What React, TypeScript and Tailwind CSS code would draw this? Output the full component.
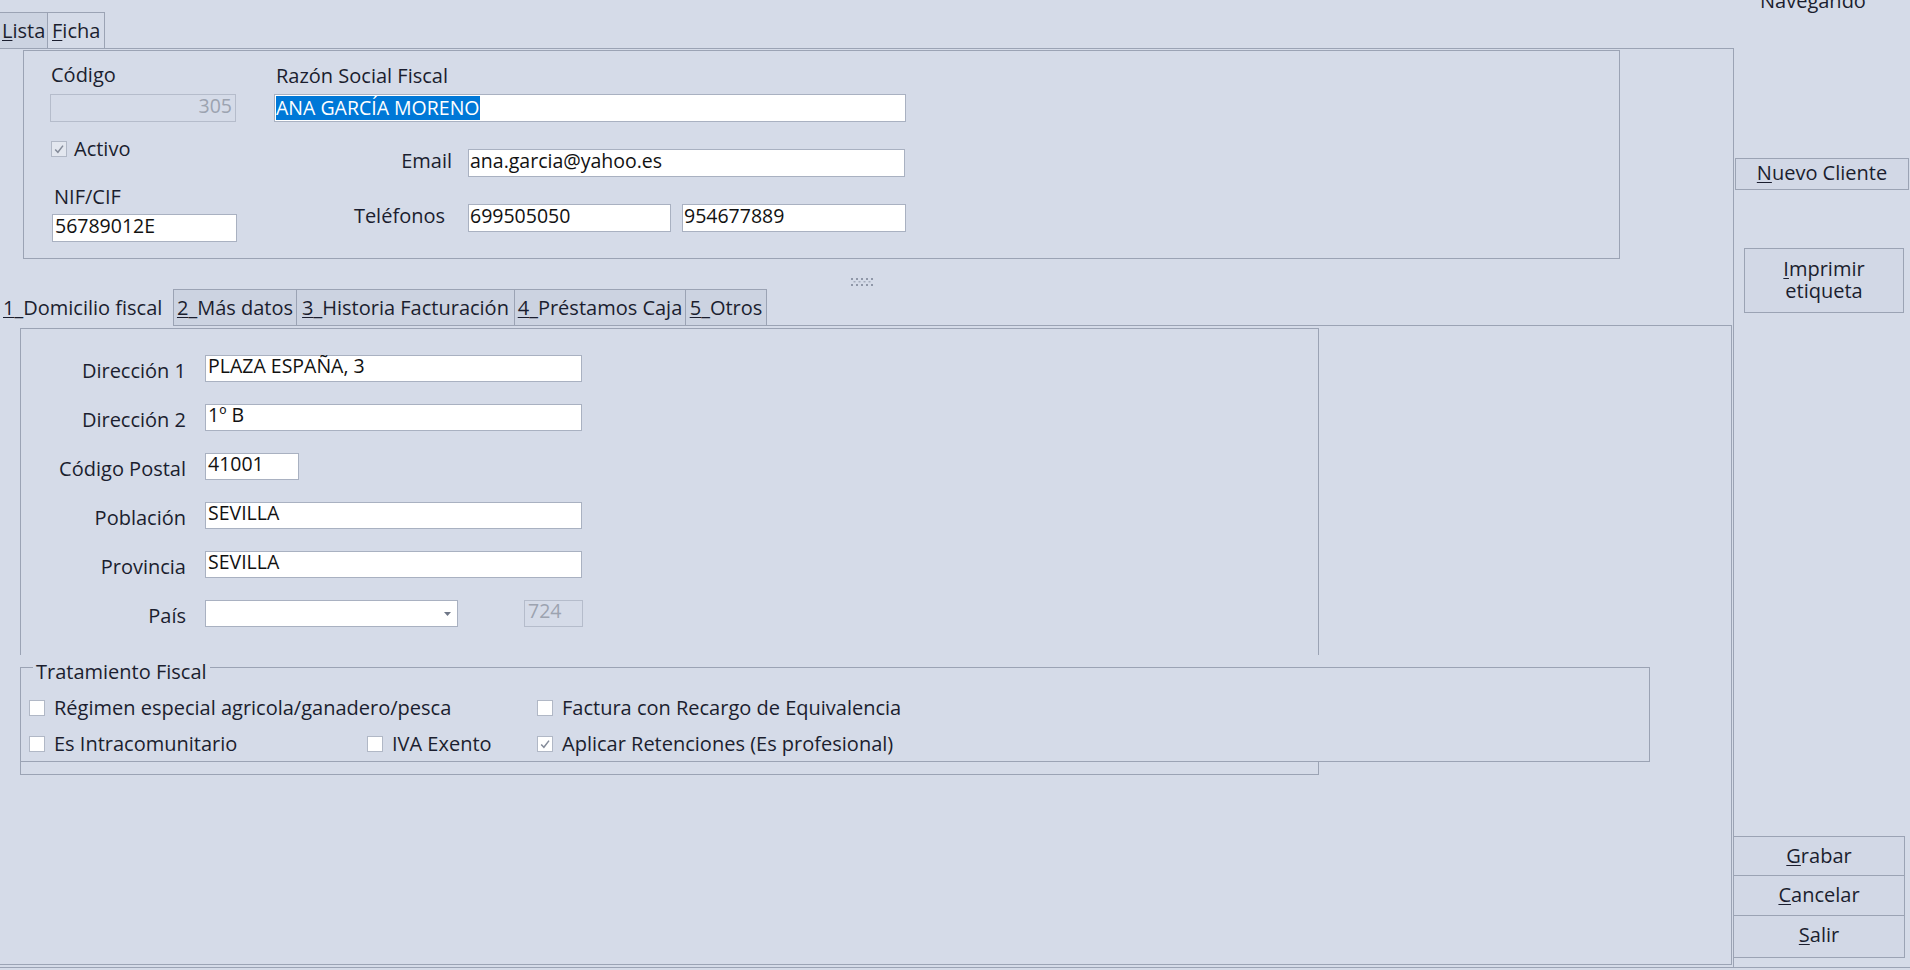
import React from "react";

// Underlined mnemonic letter, as Swing draws it on tabs, buttons and labels.
function M({ children }: { children: React.ReactNode }) {
  return <span className="underline decoration-1 underline-offset-[2px]">{children}</span>;
}

function Check({ checked = false, muted = false }: { checked?: boolean; muted?: boolean }) {
  return (
    <span
      className={`flex h-[16px] w-[16px] shrink-0 items-center justify-center border border-[#b1b8c6] ${
        muted ? "bg-[#e3e7ef]" : "bg-white"
      }`}
    >
      {checked && (
        <svg width="12" height="12" viewBox="0 0 12 12">
          <path d="M2.2 6.4 L4.9 9.3 L10 2.6" fill="none" stroke="#858c9a" strokeWidth="1.5" />
        </svg>
      )}
    </span>
  );
}

function CheckItem({
  label,
  checked = false,
  className = "",
}: {
  label: string;
  checked?: boolean;
  className?: string;
}) {
  return (
    <div className={`flex h-[23px] items-start gap-[9px] whitespace-nowrap ${className}`}>
      <span className="mt-[3px]">
        <Check checked={checked} />
      </span>
      <span className="-mt-[1px]">{label}</span>
    </div>
  );
}

function FormRow({ label, children }: { label: string; children: React.ReactNode }) {
  return (
    <div className="flex h-[27px] items-start">
      <div className="mt-[4px] w-[165px] text-right">{label}</div>
      <div className="ml-[19px] flex items-start">{children}</div>
    </div>
  );
}

function TextBox({ value, className = "" }: { value: string; className?: string }) {
  return (
    <div
      className={`h-[27px] whitespace-nowrap border border-[#a9b1c1] bg-white px-[2px] text-[19.5px] leading-[19px] text-[#111] ${className}`}
    >
      {value}
    </div>
  );
}

export default function App() {
  return (
    <div className="h-[970px] w-[1910px] overflow-hidden bg-[#d5dbe8] font-['Open_Sans','Liberation_Sans',Arial,sans-serif] text-[20px] leading-[23px] text-[#1b1e2f]">
      <div className="flex h-[968px] border-b border-[#9ba3b4]">
        {/* Main work area */}
        <div className="flex w-[1734px] flex-col">
          {/* Lista / Ficha */}
          <div className="mt-[12px] flex h-[36px] whitespace-nowrap">
            <div className="w-[47px] border-t border-[#9ba3b4] bg-[#ccd3e1] pl-[2px] pt-[6px]">
              <M>L</M>ista
            </div>
            <div className="w-[58px] border-x border-t border-[#9ba3b4] pl-[4px] pt-[6px]">
              <M>F</M>icha
            </div>
          </div>

          <div className="flex flex-1 flex-col border-r border-t border-[#9ba3b4]">
            {/* Header data */}
            <div className="ml-[23px] mt-[1px] flex h-[209px] w-[1597px] border border-[#9ba3b4] pl-[26px]">
              <div className="flex w-[186px] flex-col">
                <div className="ml-[1px] mt-[12px]">Código</div>
                <div className="mt-[8px] h-[28px] w-[186px] border border-[#b5bccb] pr-[3px] text-right text-[19.5px] leading-[22px] text-[#9ca3b0]">
                  305
                </div>
                <div className="ml-[1px] mt-[15px] flex h-[23px] items-center gap-[7px]">
                  <Check checked muted />
                  <span className="-mt-[1px]">Activo</span>
                </div>
                <div className="ml-[4px] mt-[25px]">NIF/CIF</div>
                <div className="ml-[2px] mt-[6px] h-[28px] w-[185px] border border-[#a9b1c1] bg-white px-[2px] text-[19.5px] leading-[22px] text-[#111]">
                  56789012E
                </div>
              </div>

              <div className="ml-[38px] flex flex-col">
                <div className="ml-[2px] mt-[13px]">Razón Social Fiscal</div>
                <div className="mt-[7px] h-[28px] w-[632px] border border-[#a9b1c1] bg-white px-[1px] text-[19.5px] leading-[22px]">
                  <span className="mt-[1px] inline-block bg-[#0078d7] leading-[24px] text-white">
                    ANA GARCÍA MORENO
                  </span>
                </div>
                <div className="mt-[27px] flex items-start">
                  <div className="w-[178px] text-right">Email</div>
                  <div className="ml-[16px] h-[28px] w-[437px] border border-[#a9b1c1] bg-white px-[1px] text-[19.5px] leading-[22px] text-[#111]">
                    ana.garcia@yahoo.es
                  </div>
                </div>
                <div className="mt-[27px] flex items-start">
                  <div className="w-[171px] text-right">Teléfonos</div>
                  <div className="ml-[23px] h-[28px] w-[203px] border border-[#a9b1c1] bg-white px-[1px] text-[19.5px] leading-[22px] text-[#111]">
                    699505050
                  </div>
                  <div className="ml-[11px] h-[28px] w-[224px] border border-[#a9b1c1] bg-white px-[1px] text-[19.5px] leading-[22px] text-[#111]">
                    954677889
                  </div>
                </div>
              </div>
            </div>

            {/* Split pane grip */}
            <div className="ml-[851px] mt-[19px] h-[8px] w-[24px]">
              <svg width="24" height="8" viewBox="0 0 24 8">
                {[0, 5, 10, 15, 20].map((x) => (
                  <g key={x} fill="#8f97a8">
                    <rect x={x} y={0} width="2" height="2" />
                    <rect x={x} y={6} width="2" height="2" />
                  </g>
                ))}
                {[2.5, 7.5, 12.5, 17.5].map((x) => (
                  <rect key={x} x={x} y={3} width="2" height="1.5" fill="#a6adbc" />
                ))}
              </svg>
            </div>

            {/* Tabbed pane */}
            <div className="mb-[2px] mt-[3px] flex w-[1732px] flex-1 flex-col">
              <div className="flex h-[37px] whitespace-nowrap">
                <div className="w-[173px] pl-[3px] pt-[7px]">
                  <M>1</M>_Domicilio fiscal
                </div>
                <div className="w-[123px] border-y border-l border-[#9ba3b4] bg-[#ccd3e1] pt-[6px] text-center">
                  <M>2</M>_Más datos
                </div>
                <div className="w-[218px] border-y border-l border-[#9ba3b4] bg-[#ccd3e1] pt-[6px] text-center">
                  <M>3</M>_Historia Facturación
                </div>
                <div className="w-[171px] border-y border-l border-[#9ba3b4] bg-[#ccd3e1] pt-[6px] text-center">
                  <M>4</M>_Préstamos Caja
                </div>
                <div className="w-[82px] border border-[#9ba3b4] bg-[#ccd3e1] pt-[6px] text-center">
                  <M>5</M>_Otros
                </div>
                <div className="flex-1 border-b border-[#9ba3b4]" />
              </div>

              <div className="flex-1 border-b border-r border-[#9ba3b4]">
                <div className="ml-[20px] mt-[2px] h-[447px] w-[1299px] border border-[#9ba3b4]">
                  <div className="flex flex-col gap-[22px] pt-[26px]">
                    <FormRow label="Dirección 1">
                      <TextBox value="PLAZA ESPAÑA, 3" className="w-[377px]" />
                    </FormRow>
                    <FormRow label="Dirección 2">
                      <TextBox value="1º B" className="w-[377px]" />
                    </FormRow>
                    <FormRow label="Código Postal">
                      <TextBox value="41001" className="w-[94px]" />
                    </FormRow>
                    <FormRow label="Población">
                      <TextBox value="SEVILLA" className="w-[377px]" />
                    </FormRow>
                    <FormRow label="Provincia">
                      <TextBox value="SEVILLA" className="w-[377px]" />
                    </FormRow>
                    <FormRow label="País">
                      <div className="flex h-[27px] w-[253px] items-center justify-end border border-[#a9b1c1] bg-white pr-[6px]">
                        <svg width="7" height="4" viewBox="0 0 7 4">
                          <path d="M0 0 H7 L3.5 4 Z" fill="#6f7787" />
                        </svg>
                      </div>
                      <div className="ml-[66px] h-[27px] w-[59px] border border-[#b5bccb] px-[3px] text-[19.5px] leading-[19px] text-[#9ca3b0]">
                        724
                      </div>
                    </FormRow>
                  </div>

                  {/* Tratamiento Fiscal */}
                  <div className="relative -ml-px mt-[28px] w-[1630px] bg-[#d5dbe8] pt-[12px]">
                    <div className="absolute left-[13px] top-[5px] bg-[#d5dbe8] px-[3px]">Tratamiento Fiscal</div>
                    <div className="h-[95px] border border-[#9ba3b4] pl-[8px] pt-[29px]">
                      <div className="grid grid-cols-[338px_170px_auto] gap-y-[13px]">
                        <CheckItem label="Régimen especial agricola/ganadero/pesca" className="col-span-2" />
                        <CheckItem label="Factura con Recargo de Equivalencia" />
                        <CheckItem label="Es Intracomunitario" />
                        <CheckItem label="IVA Exento" />
                        <CheckItem label="Aplicar Retenciones (Es profesional)" checked />
                      </div>
                    </div>
                  </div>
                </div>
              </div>
            </div>
          </div>
        </div>

        {/* Action column */}
        <div className="flex flex-1 flex-col">
          <div className="-mt-[11px] ml-[26px] whitespace-nowrap">Navegando</div>
          <div className="ml-[1px] mt-[146px] flex h-[32px] w-[174px] items-center justify-center border border-[#9ba3b4] bg-[#d2d8e6] pb-[3px]">
            <span>
              <M>N</M>uevo Cliente
            </span>
          </div>
          <div className="ml-[10px] mt-[58px] flex h-[65px] w-[160px] flex-col items-center justify-center border border-[#9ba3b4] bg-[#d2d8e6] pb-[2px] leading-[22px]">
            <span>
              <M>I</M>mprimir
            </span>
            <span>etiqueta</span>
          </div>
          <div className="-ml-px mb-[9px] mt-auto flex w-[172px] flex-col border border-[#9ba3b4] bg-[#d2d8e6]">
            <div className="flex h-[38px] items-center justify-center pb-[2px]">
              <span>
                <M>G</M>rabar
              </span>
            </div>
            <div className="flex h-[40px] items-center justify-center border-t border-[#9ba3b4] pb-[2px]">
              <span>
                <M>C</M>ancelar
              </span>
            </div>
            <div className="flex h-[42px] items-center justify-center border-t border-[#9ba3b4] pb-[4px]">
              <span>
                <M>S</M>alir
              </span>
            </div>
          </div>
        </div>
      </div>
    </div>
  );
}
